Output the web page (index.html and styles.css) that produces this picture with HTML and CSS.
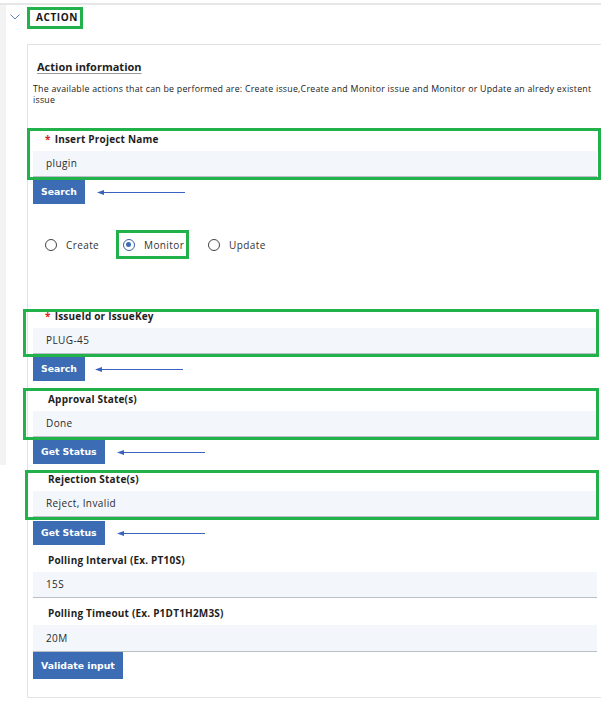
FILE: index.html
```html
<!DOCTYPE html>
<html>
<head>
<meta charset="utf-8">
<link rel="stylesheet" href="styles.css">
</head>
<body>
<div class="topline"></div>
<div class="page">
  <div class="strip"></div>
  <div class="main">
    <div class="header">
      <svg class="chev" width="10" height="6" viewBox="0 0 10 6"><path d="M0.5 0.5 L5 5 L9.5 0.5" fill="none" stroke="#5a7bbf" stroke-width="1"/></svg>
      <div class="title mark mark-title">ACTION</div>
    </div>
    <div class="panel">
      <div class="heading">Action information</div>
      <p class="desc">The available actions that can be performed are: Create issue,Create and Monitor issue and Monitor or Update an alredy existent issue</p>

      <div class="field field-1 mark mark-f1">
        <div class="label req"><span class="star">*</span>Insert Project Name</div>
        <div class="input">plugin</div>
      </div>
      <div class="btnrow">
        <div class="btn">Search</div>
        <svg class="arrow" width="88" height="7" viewBox="0 0 88 7"><path d="M2 3.5 H88" stroke="#3a62c0" stroke-width="1"/><path d="M0 3.5 L7 1 L7 6 Z" fill="#3a62c0"/></svg>
      </div>

      <div class="radios">
        <div class="radio radio-create"><span class="circle"></span>Create</div>
        <div class="radio radio-monitor mark mark-radio"><span class="circle on"></span>Monitor</div>
        <div class="radio"><span class="circle"></span>Update</div>
      </div>

      <div class="field field-2 mark mark-f2">
        <div class="label req"><span class="star">*</span>IssueId or IssueKey</div>
        <div class="input">PLUG-45</div>
      </div>
      <div class="btnrow">
        <div class="btn">Search</div>
        <svg class="arrow arrow-short" width="88" height="7" viewBox="0 0 88 7"><path d="M2 3.5 H88" stroke="#3a62c0" stroke-width="1"/><path d="M0 3.5 L7 1 L7 6 Z" fill="#3a62c0"/></svg>
      </div>

      <div class="field field-3 mark mark-f3">
        <div class="label">Approval State(s)</div>
        <div class="input">Done</div>
      </div>
      <div class="btnrow">
        <div class="btn">Get Status</div>
        <svg class="arrow" width="88" height="7" viewBox="0 0 88 7"><path d="M2 3.5 H88" stroke="#3a62c0" stroke-width="1"/><path d="M0 3.5 L7 1 L7 6 Z" fill="#3a62c0"/></svg>
      </div>

      <div class="field field-4 mark mark-f4">
        <div class="label">Rejection State(s)</div>
        <div class="input">Reject, Invalid</div>
      </div>
      <div class="btnrow btnrow-4">
        <div class="btn">Get Status</div>
        <svg class="arrow" width="88" height="7" viewBox="0 0 88 7"><path d="M2 3.5 H88" stroke="#3a62c0" stroke-width="1"/><path d="M0 3.5 L7 1 L7 6 Z" fill="#3a62c0"/></svg>
      </div>

      <div class="field field-5">
        <div class="label">Polling Interval (Ex. PT10S)</div>
        <div class="input">15S</div>
      </div>

      <div class="field field-6">
        <div class="label">Polling Timeout (Ex. P1DT1H2M3S)</div>
        <div class="input input-last">20M</div>
      </div>
      <div class="btnrow btnrow-last">
        <div class="btn btn-tall">Validate input</div>
      </div>
    </div>
  </div>
</div>
</body>
</html>
```

FILE: styles.css
```css
* { box-sizing: border-box; }
html, body { margin: 0; padding: 0; background: #fff; }
body {
  font-family: "Open Sans", "Liberation Sans", sans-serif;
  color: #222;
  width: 601px;
  overflow: hidden;
}
.topline {
  height: 2px;
  margin-top: 3px;
  background: #e6e6e6;
}
.page {
  display: flex;
  align-items: flex-start;
}
.strip {
  width: 6px;
  height: 460px;
  background: #f3f3f3;
  flex: none;
}
.main {
  flex: 1;
  min-width: 0;
}
.header {
  display: flex;
  align-items: center;
  height: 23px;
  padding-left: 4px;
}
.chev { margin-top: 1px; }
.title {
  margin-left: 7px;
  height: 12px;
  line-height: 12px;
  font-size: 10px;
  font-weight: 700;
  letter-spacing: 0.6px;
  color: #161616;
  padding-left: 9px;
}
.panel {
  margin-left: 21px;
  margin-top: 16px;
  border: 1px solid #e2e2e2;
  border-right: none;
  padding: 0 4px 18px 5px;
  height: 654px;
}
.heading {
  margin: 15px 0 0 4px;
  font-size: 11px;
  font-weight: 700;
  line-height: 14px;
  text-decoration: underline;
  text-decoration-color: #9a9a9a;
  text-underline-offset: 2px;
  color: #1e1e1e;
}
.desc {
  margin: 10px 0 0 0;
  font-size: 8.8px;
  line-height: 11px;
  letter-spacing: 0.24px;
  font-weight: 500;
  color: #222;
}
.field {
  position: relative;
  display: flex;
  flex-direction: column;
}
.field-1 { margin-top: 22px; }
.field-2 { margin-top: 46px; }
.field-3 { margin-top: 7px; }
.field-4 { margin-top: 4px; }
.field-5 { margin-top: 4px; }
.field-6 { margin-top: 4px; }
.label {
  height: 23px;
  line-height: 23px;
  font-size: 10px;
  font-weight: 700;
  letter-spacing: 0.2px;
  padding-left: 15px;
  color: #1e1e1e;
}
.label.req { padding-left: 12px; }
.star { color: #da1e28; margin-right: 4px; }
.input {
  height: 26px;
  line-height: 25px;
  background: #f3f6fb;
  border-bottom: 1px solid #b9bfc7;
  font-size: 10px;
  letter-spacing: 0.4px;
  padding-left: 13px;
  color: #2a2a2a;
}
.input-last { height: 27px; line-height: 26px; }
.btnrow {
  display: flex;
  align-items: center;
  margin-top: 3px;
}
.btnrow-4 { margin-top: 4px; }
.btnrow-last { margin-top: 0; }
.btn {
  height: 24px;
  line-height: 24px;
  background: #3b6cb4;
  color: #fff;
  font-family: "DejaVu Sans", Verdana, sans-serif;
  font-weight: 700;
  font-size: 9.3px;
  padding: 0 8px;
}
.btn-tall { height: 27px; line-height: 27px; }
.arrow { margin-left: 12px; display: block; }
.arrow-short { margin-left: 10px; }
.radios {
  display: flex;
  margin-top: 26px;
  height: 29px;
  padding-left: 12px;
}
.radio {
  position: relative;
  display: flex;
  align-items: center;
  gap: 9px;
  font-size: 10px;
  letter-spacing: 0.4px;
  color: #333;
}
.radio-create { width: 78px; }
.radio-monitor { width: 85px; }
.circle {
  width: 12px;
  height: 12px;
  border-radius: 50%;
  border: 1.5px solid #444;
  flex: none;
  position: relative;
}
.circle.on { border-color: #3a5f9f; }
.circle.on::after {
  content: "";
  position: absolute;
  left: 2px; top: 2px;
  width: 5px; height: 5px;
  border-radius: 50%;
  background: #3b6cb4;
}
.mark { position: relative; }
.mark::after {
  content: "";
  position: absolute;
  border: 3px solid #22b24c;
  pointer-events: none;
}
.mark-title::after { left: 0; right: -5px; top: -4px; bottom: -6px; }
.mark-f1::after { left: -6px; right: -4px; top: 0; bottom: -3px; }
.mark-f2::after { left: -10px; right: -2px; top: 4px; bottom: -3px; }
.mark-f3::after { left: -10px; right: -2px; top: 0; bottom: -3px; }
.mark-f4::after { left: -8px; right: -2px; top: 2px; bottom: -3px; }
.mark-radio::after { left: -7px; right: 19px; top: 0; bottom: 0; }
```
